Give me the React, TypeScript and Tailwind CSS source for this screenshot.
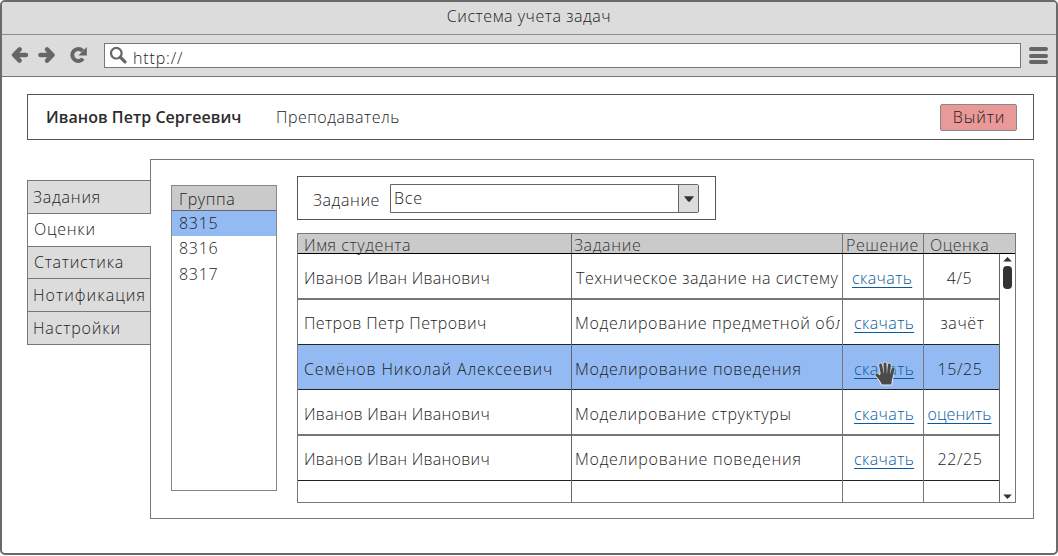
import type { ReactNode } from "react";

const tabs = [
  { name: "Задания", cls: "h-[33px] pl-[5px] pt-[6px] tracking-[0.8px] bg-[#dcdcdc]" },
  { name: "Оценки", cls: "relative z-10 -mr-px h-[33px] pl-[6px] pt-[5px] tracking-[0.75px] bg-white" },
  { name: "Статистика", cls: "h-[32px] pl-[6px] pt-[5px] tracking-[0.75px] bg-[#dcdcdc]" },
  { name: "Нотификация", cls: "h-[33px] pl-[5px] pt-[6px] tracking-[1.05px] bg-[#dcdcdc]" },
  { name: "Настройки", cls: "h-[34px] border-b pl-[5px] pt-[6px] tracking-[0.85px] bg-[#dcdcdc]" },
];

type Row = {
  student: string;
  studentCls: string;
  task: string;
  taskCls: string;
  mark: ReactNode;
  markCls: string;
  rowCls: string;
  linkCls: string;
};

const link = "text-[#0a5a9e] underline decoration-1 underline-offset-[3px]";

const rows: Row[] = [
  {
    student: "Иванов Иван Иванович",
    studentCls: "tracking-[0.27px]",
    task: "Техническое задание на систему",
    taskCls: "pl-[5px] tracking-[0.53px]",
    mark: "4/5",
    markCls: "pr-[3px]",
    rowCls: "h-[46px] border-b-2 border-[#777] pt-[14px]",
    linkCls: "pl-[10px]",
  },
  {
    student: "Петров Петр Петрович",
    studentCls: "tracking-[0.4px]",
    task: "Моделирование предметной области",
    taskCls: "pl-[4px] tracking-[0.65px]",
    mark: "зачёт",
    markCls: "pl-[3px]",
    rowCls: "h-[45px] border-b border-[#222] pt-[13px]",
    linkCls: "pl-[12px]",
  },
  {
    student: "Семёнов Николай Алексеевич",
    studentCls: "tracking-[0.85px]",
    task: "Моделирование поведения",
    taskCls: "pl-[4px] tracking-[0.72px]",
    mark: "15/25",
    markCls: "pr-[2px]",
    rowCls: "h-[45px] border-b border-[#222] bg-[#93baf2] pt-[14px]",
    linkCls: "pl-[12px]",
  },
  {
    student: "Иванов Иван Иванович",
    studentCls: "tracking-[0.27px]",
    task: "Моделирование структуры",
    taskCls: "pl-[4px] tracking-[0.62px]",
    mark: <a className={link + " tracking-[0.1px]"}>оценить</a>,
    markCls: "pr-[3px]",
    rowCls: "h-[46px] border-b-2 border-[#777] pt-[14px]",
    linkCls: "pl-[12px]",
  },
  {
    student: "Иванов Иван Иванович",
    studentCls: "tracking-[0.27px]",
    task: "Моделирование поведения",
    taskCls: "pl-[4px] tracking-[0.72px]",
    mark: "22/25",
    markCls: "pr-[2px]",
    rowCls: "h-[45px] border-b border-[#222] pt-[13px]",
    linkCls: "pl-[12px]",
  },
];

function HandCursor() {
  const fingers = "M2.9 14.8L7.5 20M6.6 5L8.4 15M11 4L11.4 15M15.4 5L14.4 15M19.2 8.8L17 17";
  const palm = "M7 13.5H17.6L18.6 16C18.4 19 17.6 21 17.4 24.4H7.6C7 22 5 19.5 3.6 17Z";
  return (
    <svg width="24" height="28" viewBox="0 0 24 28" strokeLinecap="round" strokeLinejoin="round">
      <path d={fingers} stroke="#d6dfec" strokeWidth="4.4" fill="none" />
      <path d={palm} stroke="#eee" strokeWidth="2" fill="#4a4a4a" />
      <path d={fingers} stroke="#4a4a4a" strokeWidth="3" fill="none" />
      <path d={palm} fill="#4a4a4a" />
    </svg>
  );
}

function Toolbar() {
  return (
    <div className="flex h-[42px] border-b border-[#777] bg-[#dcdcdc] pt-[8px]">
      <svg className="ml-[9px] mt-[3px]" width="80" height="18" viewBox="0 0 80 18">
        <g fill="none" stroke="#666" strokeWidth="4.4" strokeLinecap="round" strokeLinejoin="round">
          <path d="M15 9H4M8.6 3.4L3 9L8.6 14.6" />
          <path d="M29.4 9H40M36 3.4L41.6 9L36 14.6" />
          <path d="M72 12.6A6 6 0 1 1 71.6 4.8" strokeWidth="4" strokeLinecap="butt" />
        </g>
        <path d="M75.8 1V9.4H67.4Z" fill="#666" />
      </svg>
      <div className="ml-[13px] flex h-[25px] w-[917px] border border-[#777] bg-white">
        <svg className="ml-[4px] mt-[2px]" width="19" height="18" viewBox="0 0 19 18">
          <circle cx="7.3" cy="7.2" r="5.3" fill="none" stroke="#666" strokeWidth="2.2" />
          <path d="M11.3 11.2L16 15.8" stroke="#666" strokeWidth="3.2" strokeLinecap="round" />
        </svg>
        <span className="ml-[5px] mt-[5px] leading-[18px] tracking-[0.85px]">http://</span>
      </div>
      <div className="ml-[8px] mt-[4px] flex flex-col gap-[2.5px]">
        <div className="h-[4px] w-[19px] rounded-full bg-[#666]" />
        <div className="h-[4px] w-[19px] rounded-full bg-[#666]" />
        <div className="h-[4px] w-[19px] rounded-full bg-[#666]" />
      </div>
    </div>
  );
}

function StudentsTable() {
  return (
    <div className="mt-[13px] h-[270px] w-[719px] border border-[#777]">
      <div className="flex h-[20px] border-b border-black bg-[#cacaca] leading-[22px] text-[#333]">
        <div className="w-[273px] pl-[6px] tracking-[0.6px]">Имя студента</div>
        <div className="w-[271px] border-l border-[#666] pl-[2px] tracking-[0.65px]">Задание</div>
        <div className="w-[81px] border-l border-[#777] pl-[3px] tracking-[0.6px]">Решение</div>
        <div className="grow border-l border-[#777] pl-[6px] tracking-[0.5px]">Оценка</div>
      </div>
      <div className="relative flex h-[248px] overflow-hidden">
        <div className="flex w-[701px] flex-col">
          {rows.map((r, i) => (
            <div key={i} className={"flex shrink-0 items-stretch " + r.rowCls}>
              <div className={"w-[273px] pl-[6px] " + r.studentCls}>{r.student}</div>
              <div className="w-[271px] pr-[2px]">
                <div className={"overflow-hidden " + r.taskCls}>{r.task}</div>
              </div>
              <div className={"w-[81px] tracking-[0.4px] " + r.linkCls}>
                <a className={link}>скачать</a>
              </div>
              <div className={"grow text-center tracking-[0.6px] " + r.markCls}>{r.mark}</div>
            </div>
          ))}
        </div>
        <div className="flex w-[16px] flex-col items-center border-l border-[#666]">
          <svg className="mt-[3px]" width="9" height="5" viewBox="0 0 9 5">
            <path d="M4.5 0L8.8 4.6H0.2Z" fill="#333" />
          </svg>
          <div className="mt-[4px] h-[23px] w-[9px] rounded-[4px] bg-[#333]" />
          <svg className="mb-[3px] mt-auto" width="9" height="5" viewBox="0 0 9 5">
            <path d="M4.5 5L8.8 0.4H0.2Z" fill="#333" />
          </svg>
        </div>
        <div className="absolute left-[273px] top-0 h-[248px] w-px bg-[#666]" />
        <div className="absolute left-[544px] top-0 h-[248px] w-px bg-[#777]" />
        <div className="absolute left-[625px] top-0 h-[248px] w-px bg-[#777]" />
        <div className="absolute left-[576px] top-[106px]">
          <HandCursor />
        </div>
      </div>
    </div>
  );
}

export default function App() {
  return (
    <div className="h-[556px] w-[1058px] bg-white font-['Open_Sans',sans-serif] text-[16px] font-light leading-[20px] whitespace-nowrap text-[#1c1c1c]">
      <div className="h-[555px] w-[1058px] overflow-hidden rounded-[5px] border-2 border-[#6a6a6a] bg-white">
        <div className="h-[33px] border-b border-[#8c8c8c] bg-[#dcdcdc] pt-[4px] text-center tracking-[0.55px]">
          Система учета задач
        </div>
        <Toolbar />

        <div className="ml-[25px] mt-[17px] flex h-[46px] w-[1007px] border border-[#555]">
          <div className="ml-[18px] mt-[12px] w-[230px] font-semibold tracking-[0.05px] text-[#2c2c2c]">
            Иванов Петр Сергеевич
          </div>
          <div className="mt-[12px] tracking-[0.5px]">Преподаватель</div>
          <button className="ml-auto mr-[16px] mt-[9px] flex h-[27px] w-[77px] justify-center rounded-[2px] border border-[#888] bg-[#ea9999] pl-px pt-[2px] leading-[20px] tracking-[0.95px]">
            Выйти
          </button>
        </div>

        <div className="ml-[25px] mt-[19px] flex">
          <div className="flex w-[123px] flex-col pt-[21px]">
            {tabs.map((t) => (
              <div key={t.name} className={"border-l border-t border-[#777] " + t.cls}>
                {t.name}
              </div>
            ))}
          </div>
          <div className="flex h-[360px] w-[884px] border border-[#777]">
            <div className="ml-[20px] mt-[25px] h-[306px] w-[106px] border border-[#888]">
              <div className="h-[25px] border-b border-[#666] bg-[#cacaca] pl-[7px] pt-[3px] tracking-[0.6px]">Группа</div>
              <div className="h-[25px] bg-[#93baf2] pl-[7px] pt-[2px] tracking-[0.7px]">8315</div>
              <div className="h-[25px] pl-[7px] pt-[2px] tracking-[0.7px]">8316</div>
              <div className="h-[25px] pl-[7px] pt-[3px] tracking-[0.7px]">8317</div>
            </div>
            <div className="ml-[20px] mt-[16px]">
              <div className="flex h-[44px] w-[419px] border border-[#555]">
                <div className="ml-[15px] mt-[13px] w-[77px] tracking-[0.6px]">Задание</div>
                <div className="mt-[7px] flex h-[29px] w-[309px] rounded-r-[2px] border border-[#666]">
                  <div className="w-[287px] pl-[3px] pt-[3px] tracking-[0.8px]">Все</div>
                  <div className="flex grow items-center justify-center border-l border-[#666] bg-[#dcdcdc]">
                    <svg width="10" height="6" viewBox="0 0 10 6">
                      <path d="M0 0.2H10L6 5.4Q5 6.2 4 5.4Z" fill="#333" />
                    </svg>
                  </div>
                </div>
              </div>
              <StudentsTable />
            </div>
          </div>
        </div>
      </div>
    </div>
  );
}
